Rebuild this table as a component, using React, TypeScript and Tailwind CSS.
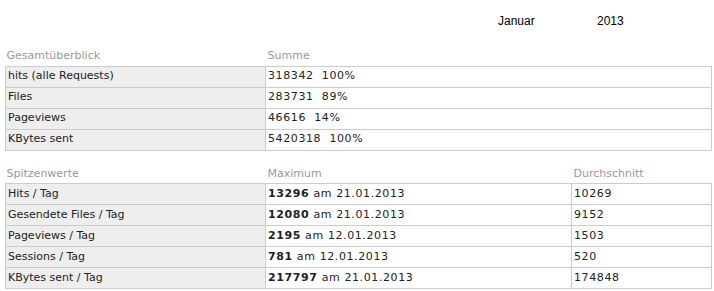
const overview = [
  { label: 'hits (alle Requests)', value: '318342', pct: '100%' },
  { label: 'Files', value: '283731', pct: '89%' },
  { label: 'Pageviews', value: '46616', pct: '14%' },
  { label: 'KBytes sent', value: '5420318', pct: '100%' },
];

const peaks = [
  { label: 'Hits / Tag', max: '13296', date: '21.01.2013', avg: '10269' },
  { label: 'Gesendete Files / Tag', max: '12080', date: '21.01.2013', avg: '9152' },
  { label: 'Pageviews / Tag', max: '2195', date: '12.01.2013', avg: '1503' },
  { label: 'Sessions / Tag', max: '781', date: '12.01.2013', avg: '520' },
  { label: 'KBytes sent / Tag', max: '217797', date: '21.01.2013', avg: '174848' },
];

const cell = 'border border-[#cccccc] h-[21px] px-[2px] py-0 align-middle';
const num = 'tracking-[0.6px]';

export default function App() {
  return (
    <div className="w-[714px] h-[291px] bg-white text-[11px] text-[#222] font-['DejaVu_Sans',Verdana,sans-serif]">
      {/* Monat / Jahr */}
      <div className="flex h-[48px] pt-[12px] font-['Liberation_Sans',Arial,sans-serif] text-[12px] text-black">
        <span className="ml-[498px] w-[99px]">Januar</span>
        <span>2013</span>
      </div>

      {/* Gesamtüberblick */}
      <table className="ml-[5px] w-[707px] border-collapse table-fixed">
        <colgroup>
          <col className="w-[260px]" />
          <col />
        </colgroup>
        <thead>
          <tr className="text-[#999999]">
            <th className="text-left font-normal px-[1px] h-[18px] align-bottom pb-[1px]">Gesamtüberblick</th>
            <th className="text-left font-normal px-[2px] h-[18px] align-bottom pb-[1px]">Summe</th>
          </tr>
        </thead>
        <tbody>
          {overview.map(row => (
            <tr key={row.label}>
              <td className={`${cell} bg-[#eeeeee]`}>{row.label}</td>
              <td className={`${cell} ${num}`}>
                {row.value}&nbsp; {row.pct}
              </td>
            </tr>
          ))}
        </tbody>
      </table>

      {/* Spitzenwerte */}
      <table className="ml-[5px] mt-[15px] w-[707px] border-collapse table-fixed">
        <colgroup>
          <col className="w-[260px]" />
          <col className="w-[306px]" />
          <col />
        </colgroup>
        <thead>
          <tr className="text-[#999999]">
            <th className="text-left font-normal px-[1px] h-[18px] align-bottom pb-[1px]">Spitzenwerte</th>
            <th className="text-left font-normal px-[2px] h-[18px] align-bottom pb-[1px]">Maximum</th>
            <th className="text-left font-normal px-[2px] h-[18px] align-bottom pb-[1px]">Durchschnitt</th>
          </tr>
        </thead>
        <tbody>
          {peaks.map(row => (
            <tr key={row.label}>
              <td className={`${cell} bg-[#eeeeee]`}>{row.label}</td>
              <td className={`${cell} ${num}`}>
                <b>{row.max}</b> am {row.date}
              </td>
              <td className={`${cell} ${num}`}>{row.avg}</td>
            </tr>
          ))}
        </tbody>
      </table>
    </div>
  );
}
